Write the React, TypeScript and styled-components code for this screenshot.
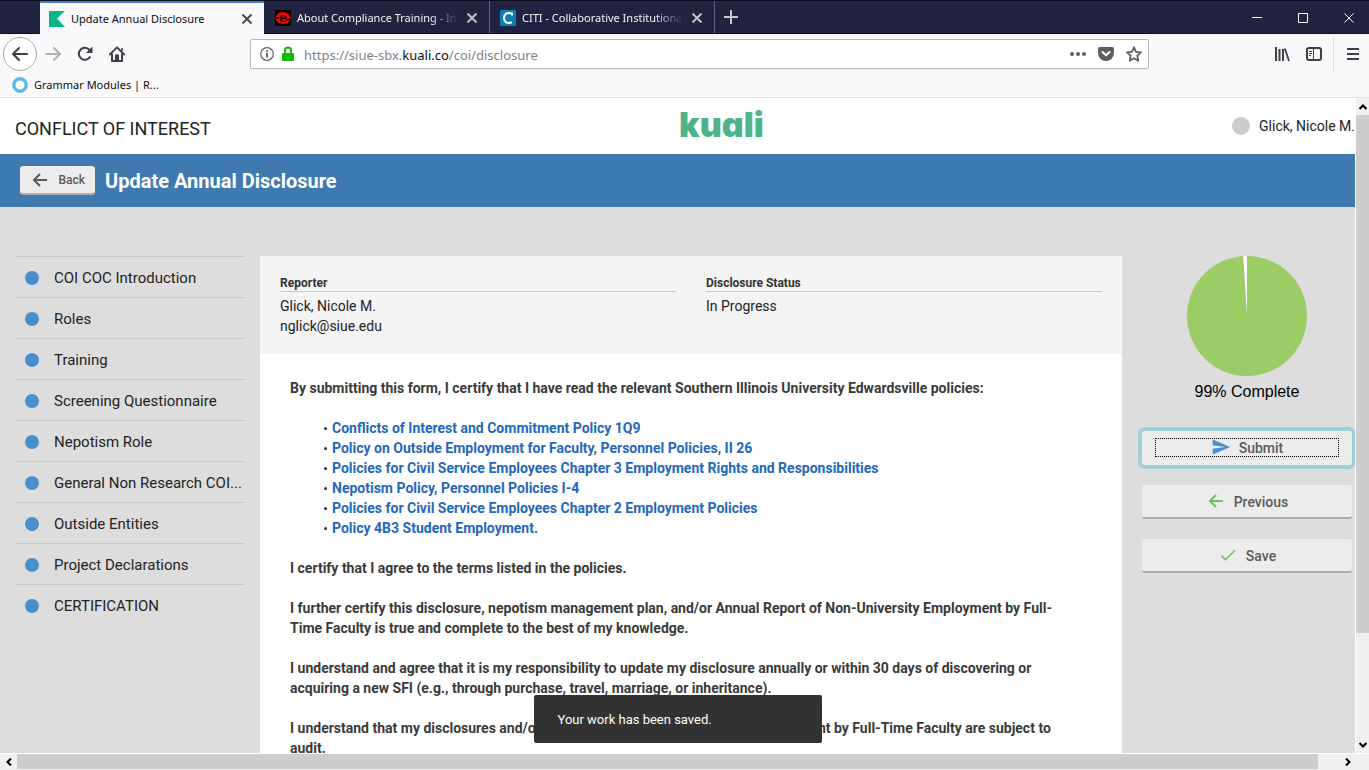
import React from 'react';
import styled, { createGlobalStyle, css } from 'styled-components';
import { MdSend, MdCheck } from 'react-icons/md';

const GlobalStyle = createGlobalStyle`
  *, *::before, *::after { box-sizing: border-box; }
  html, body { margin: 0; height: 100%; }
  body { font-family: Roboto, "Liberation Sans", sans-serif; color: #222; overflow: hidden; }
  button { font-family: inherit; padding: 0; border: 0; background: none; }
  h1, h2, p, ul, dl, dd { margin: 0; padding: 0; }
  a { color: inherit; text-decoration: none; }
  svg { display: block; flex: none; }
`;

const uiFont = '"Noto Sans", "Open Sans", sans-serif';

const Window = styled.div`
  display: flex;
  flex-direction: column;
  height: 100vh;
`;

/* ---------- browser chrome ---------- */

const TabBar = styled.div`
  display: flex;
  height: 34px;
  flex: none;
  padding-left: 40px;
  background: #212341;
  border-top: 1px solid #0b0b1c;
  border-bottom: 1px solid #0f0f24;
  font: 11px ${uiFont};
`;

const Tab = styled.div<{ $active?: boolean }>`
  display: flex;
  align-items: center;
  gap: 6px;
  width: 225px;
  padding: 1px 9px 0 10px;
  color: #f5f5fa;
  border-left: 1px solid #62637a;
  ${p => p.$active && css`
    width: 224px;
    height: 33px;
    padding: 0 9px;
    color: #0c0c0d;
    background: #f9f9fb;
    border-left: 0;
    border-top: 2px solid #3a7fd0;
    & + div { border-left-color: transparent; }
  `}
`;

const TabTitle = styled.span<{ $fade?: boolean }>`
  flex: 1;
  min-width: 0;
  overflow: hidden;
  white-space: nowrap;
  ${p => p.$fade && css`
    mask-image: linear-gradient(to left, transparent, #000 28px);
  `}
`;

const TabClose = styled.button<{ $dark?: boolean }>`
  display: grid;
  place-items: center;
  width: 16px;
  height: 16px;
  color: ${p => (p.$dark ? '#4a4a4f' : '#c2c2cc')};
`;

const NewTab = styled.button`
  display: grid;
  place-items: center;
  width: 33px;
  color: #c8c8d2;
  border-left: 1px solid #62637a;
`;

const WindowButtons = styled.div`
  display: flex;
  gap: 6px;
  margin-left: auto;
`;

const WindowButton = styled.button`
  display: grid;
  place-items: center;
  width: 40px;
  padding-top: 2px;
  color: #fff;
`;

const Toolbar = styled.div`
  display: flex;
  align-items: center;
  flex: none;
  height: 40px;
  padding: 0 8px 0 3px;
  background: #f9f9fb;
  color: #4a4a4f;
`;

const NavButtons = styled.div`
  display: flex;
  align-items: center;
  width: 247px;
`;

const NavButton = styled.button<{ $round?: boolean; $faded?: boolean }>`
  display: grid;
  place-items: center;
  width: 32px;
  height: 34px;
  color: ${p => (p.$faded ? '#b4b4b7' : '#3f3f44')};
  ${p => p.$round && css`
    width: 34px;
    background: #fff;
    border: 1px solid #a9a9ad;
    border-radius: 50%;
  `}
`;

const UrlBar = styled.div`
  display: flex;
  align-items: center;
  gap: 6px;
  flex: 1;
  height: 30px;
  padding: 0 6px 0 8px;
  background: #fff;
  border: 1px solid #b9b9bc;
  border-radius: 2px;
  box-shadow: 0 1px 3px rgba(0, 0, 0, 0.06);
`;

const UrlText = styled.div`
  flex: 1;
  padding: 2px 0 0 3px;
  font: 13px ${uiFont};
  color: #808085;
  white-space: nowrap;
  b { font-weight: 400; color: #0c0c0d; }
`;

const UrlActions = styled.div`
  display: flex;
  gap: 12px;
`;

const IconButton = styled.button`
  display: grid;
  place-items: center;
  width: 16px;
  height: 16px;
  color: #5f5f63;
`;

const ToolbarEnd = styled.div`
  display: flex;
  align-items: center;
  justify-content: flex-end;
  gap: 16px;
  width: 212px;
`;

const MenuBox = styled.div`
  display: flex;
  align-items: center;
  height: 34px;
  margin-left: -5px;
  padding-left: 11px;
  border-left: 1px solid #dcdcde;
`;

const Bookmarks = styled.div`
  display: flex;
  align-items: center;
  flex: none;
  height: 24px;
  padding: 0 0 2px 12px;
  background: #f9f9fb;
  border-bottom: 1px solid #e0e0e2;
  font: 11px ${uiFont};
  color: #0c0c0d;
  a { display: flex; align-items: center; gap: 6px; }
`;

/* ---------- scrolling frame ---------- */

const Frame = styled.div`
  display: grid;
  grid-template-columns: minmax(0, 1fr) 14px;
  grid-template-rows: minmax(0, 1fr) 17px;
  flex: 1;
  min-height: 0;
`;

const Viewport = styled.div`
  position: relative;
  overflow: hidden;
  background: #ddd;
`;

const ScrollTrack = styled.div<{ $horizontal?: boolean }>`
  display: flex;
  flex-direction: ${p => (p.$horizontal ? 'row' : 'column')};
  background: #f0f0f0;
  color: #5a5a5a;
  ${p => (p.$horizontal
    ? css`grid-column: 1 / -1; border-top: 1px solid #fff; border-bottom: 1px solid #f0f0f0; padding-right: 13px;`
    : css`border-left: 1px solid #fff;`)}
`;

const ScrollArrow = styled.button`
  display: grid;
  place-items: center;
  flex: 0 0 17px;
`;

const ScrollThumb = styled.div<{ $grow: number }>`
  flex: ${p => p.$grow} 1 0;
  background: #cdcdcd;
`;

const ScrollRest = styled.div<{ $grow: number }>`
  flex: ${p => p.$grow} 1 0;
`;

/* ---------- application ---------- */

const Page = styled.div`
  width: calc(100% + 22px);
`;

const AppHeader = styled.header`
  display: flex;
  align-items: center;
  justify-content: space-between;
  height: 56px;
  padding: 0 22px 0 15px;
  background: #fff;
`;

const AppName = styled.div`
  padding-top: 6px;
  font-size: 18px;
  line-height: 24px;
  color: #222;
`;

const Logo = styled.a`
  font: 900 34px/40px Inter, Lato, sans-serif;
  font-feature-settings: "cv11";
  color: #4fb389;
  padding-bottom: 2px;
`;

const User = styled.div`
  display: flex;
  align-items: center;
  gap: 9px;
  font-size: 14px;
  line-height: 20px;
`;

const Avatar = styled.span`
  width: 18px;
  height: 18px;
  border-radius: 50%;
  background: #ccc;
`;

const TitleBar = styled.div`
  display: flex;
  align-items: center;
  gap: 10px;
  height: 53px;
  padding: 0 20px;
  background: #3e7ab0;
`;

const Title = styled.h1`
  font-size: 20px;
  line-height: 24px;
  font-weight: 700;
  color: #fff;
`;

const RaisedButton = styled.button<{ $small?: boolean; $focused?: boolean }>`
  display: flex;
  align-items: center;
  justify-content: center;
  width: 100%;
  height: 34px;
  padding: 0 13px;
  font-size: 14px;
  font-weight: 500;
  line-height: 18px;
  color: #5a5a5a;
  background: #ececec;
  border-bottom: 2px solid #adadad;
  border-radius: 3px;
  ${p => p.$small && css`
    width: 75px;
    height: 29px;
    font-size: 12px;
    padding: 0 10px;
    justify-content: space-between;
  `}
  ${p => p.$focused && css`
    border-bottom-color: #ececec;
    box-shadow: 0 0 0 4px #9fd0da;
  `}
`;

const ButtonFace = styled.span<{ $focused?: boolean }>`
  display: flex;
  align-items: center;
  justify-content: center;
  gap: 8px;
  width: 100%;
  height: 19px;
  border: 1px dotted ${p => (p.$focused ? '#000' : 'transparent')};
`;

const ButtonLabel = styled.span`
  padding-top: 2px;
`;

const Columns = styled.div`
  display: grid;
  grid-template-columns: 230px minmax(0, 1fr) 210px;
  padding: 49px 25px 0 15px;
`;

const Steps = styled.nav`
  display: flex;
  flex-direction: column;
`;

const Step = styled.a`
  display: flex;
  align-items: center;
  gap: 15px;
  height: 41px;
  padding: 2px 0 0 10px;
  border-top: 1px solid #c8c8c8;
  font-size: 15px;
  line-height: 20px;
  white-space: nowrap;
  &::before {
    content: "";
    width: 14px;
    height: 14px;
    border-radius: 50%;
    background: #488fce;
  }
`;

const Sheet = styled.main`
  margin: 0 20px 0 15px;
  background: #fff;
`;

const Summary = styled.dl`
  display: grid;
  grid-template-columns: 1fr 1fr;
  gap: 30px;
  height: 98px;
  padding: 20px;
  background: #f4f4f4;
`;

const Fact = styled.div`
  dt {
    height: 16px;
    border-bottom: 1px solid #c8c8c8;
    font-size: 12px;
    font-weight: 700;
    line-height: 14px;
    color: #333;
  }
  dd {
    padding-top: 4px;
    font-size: 14px;
    line-height: 20px;
  }
`;

const Terms = styled.div`
  display: flex;
  flex-direction: column;
  gap: 20px;
  padding: 24px 50px 24px 30px;
  font-size: 14px;
  font-weight: 700;
  line-height: 20px;
  color: #3a3a3a;
`;

const PolicyList = styled.ul`
  padding-left: 34px;
  list-style: none;
  li { display: flex; align-items: center; gap: 5px; }
  li::before {
    content: "";
    width: 3px;
    height: 3px;
    border-radius: 50%;
    background: #333;
  }
  a { color: #1f68bb; }
`;

const Actions = styled.aside`
  display: flex;
  flex-direction: column;
  align-items: center;
  gap: 20px;
`;

const Progress = styled.div`
  display: flex;
  flex-direction: column;
  align-items: center;
  gap: 6px;
  margin-bottom: 10px;
  font: 16px/19px "Liberation Sans", Arial, sans-serif;
  color: #000;
`;

const Toast = styled.div`
  position: absolute;
  left: 50%;
  bottom: 10px;
  width: 288px;
  height: 48px;
  margin-left: -144px;
  padding: 1px 24px 0;
  font-size: 13px;
  line-height: 48px;
  color: #fff;
  background: #323232;
  border-radius: 2px;
`;

const Cross = ({ size = 10, width = 2 }: { size?: number; width?: number }) => (
  <svg width={size} height={size} viewBox="0 0 10 10" stroke="currentColor" strokeWidth={width} fill="none">
    <path d="M0.5 0.5L9.5 9.5M9.5 0.5L0.5 9.5" />
  </svg>
);

const Arrow = ({ color = 'currentColor', size = 20 }: { color?: string; size?: number }) => (
  <svg width={size} height={size} viewBox="-3 -3 20 20" stroke={color} strokeWidth="2" fill="none">
    <path d="M14 7H1.2M7 1L1 7L7 13" />
  </svg>
);

const Chevron = ({ d }: { d: string }) => (
  <svg width="8" height="8" viewBox="0 0 8 8" stroke="currentColor" strokeWidth="2" fill="none">
    <path d={d} />
  </svg>
);

const steps = [
  'COI COC Introduction', 'Roles', 'Training', 'Screening Questionnaire', 'Nepotism Role',
  'General Non Research COI...', 'Outside Entities', 'Project Declarations', 'CERTIFICATION',
];

const policies = [
  'Conflicts of Interest and Commitment Policy 1Q9',
  'Policy on Outside Employment for Faculty, Personnel Policies, II 26',
  'Policies for Civil Service Employees Chapter 3 Employment Rights and Responsibilities',
  'Nepotism Policy, Personnel Policies I-4',
  'Policies for Civil Service Employees Chapter 2 Employment Policies',
  'Policy 4B3 Student Employment.',
];

function BrowserChrome() {
  return (
    <>
      <TabBar>
        <Tab $active>
          <svg width="16" height="16" viewBox="0 0 16 16"><path d="M0 0H16L8 7.5L16 16H0Z" fill="#0bb58a" /></svg>
          <TabTitle>Update Annual Disclosure</TabTitle>
          <TabClose $dark aria-label="Close tab"><Cross /></TabClose>
        </Tab>
        <Tab>
          <svg width="16" height="16" viewBox="0 0 16 16">
            <rect width="16" height="16" fill="#000" />
            <ellipse cx="8" cy="8" rx="7.5" ry="6" fill="#f00" />
            <path d="M5 8.5H11C11 4.500 5.500 4.500 5.500 8.500C5.500 12 9.500 12 11.500 10.500M1 8H4M12 10.500L15 9" stroke="#200" strokeWidth="1.4" fill="none" />
          </svg>
          <TabTitle $fade>About Compliance Training - In</TabTitle>
          <TabClose aria-label="Close tab"><Cross /></TabClose>
        </Tab>
        <Tab>
          <svg width="16" height="16" viewBox="0 0 16 16">
            <rect width="16" height="16" fill="#0e7fb0" />
            <path d="M12 5.500V3.500C7 1.800 4 4 4 8C4 12 7 14.200 12 12.300" stroke="#fff" strokeWidth="2" fill="none" />
          </svg>
          <TabTitle $fade>CITI - Collaborative Institutiona</TabTitle>
          <TabClose aria-label="Close tab"><Cross /></TabClose>
        </Tab>
        <NewTab aria-label="New tab">
          <svg width="14" height="14" viewBox="0 0 14 14" stroke="currentColor" strokeWidth="2"><path d="M7 0V14M0 7H14" /></svg>
        </NewTab>
        <WindowButtons>
          <WindowButton aria-label="Minimize">
            <svg width="10" height="10" viewBox="0 0 10 10" stroke="currentColor"><path d="M0 4.500H10" /></svg>
          </WindowButton>
          <WindowButton aria-label="Maximize">
            <svg width="10" height="10" viewBox="0 0 10 10" stroke="currentColor" fill="none"><path d="M0.500 0.500H9.500V9.500H0.500Z" /></svg>
          </WindowButton>
          <WindowButton aria-label="Close window"><Cross width={1} /></WindowButton>
        </WindowButtons>
      </TabBar>

      <Toolbar>
        <NavButtons>
          <NavButton $round aria-label="Go back">
            <svg width="16" height="14" viewBox="0 0 16 14" stroke="currentColor" strokeWidth="2" fill="none" strokeLinecap="round" strokeLinejoin="round"><path d="M15 7H1.500M7 1L1 7L7 13" /></svg>
          </NavButton>
          <NavButton $faded aria-label="Go forward">
            <svg width="16" height="14" viewBox="0 0 16 14" stroke="currentColor" strokeWidth="2" fill="none" strokeLinecap="round" strokeLinejoin="round"><path d="M1 7H14.500M9 1L15 7L9 13" /></svg>
          </NavButton>
          <NavButton aria-label="Reload">
            <svg width="16" height="16" viewBox="0 0 16 16">
              <path d="M13.200 10.500A6 6 0 1 1 12.500 4" stroke="currentColor" strokeWidth="2" fill="none" />
              <path d="M15.500 0.500V7H9Z" fill="currentColor" />
            </svg>
          </NavButton>
          <NavButton aria-label="Home">
            <svg width="16" height="16" viewBox="0 0 16 16" fill="none" stroke="currentColor">
              <path d="M0.800 8.500L8 1.300L15.200 8.500" strokeWidth="1.800" strokeLinecap="round" strokeLinejoin="round" />
              <path d="M3 7.500V15H13V7.500" strokeWidth="2" strokeLinejoin="round" />
              <path d="M13 2V5" strokeWidth="1.600" />
              <rect x="6.500" y="9" width="3" height="6" fill="currentColor" />
            </svg>
          </NavButton>
        </NavButtons>
        <UrlBar>
          <IconButton aria-label="Site information">
            <svg width="14" height="14" viewBox="0 0 14 14" fill="none" stroke="currentColor">
              <circle cx="7" cy="7" r="6.300" strokeWidth="1.200" />
              <path d="M7 6V10.500M7 3.200V4.900" strokeWidth="1.800" />
            </svg>
          </IconButton>
          <svg width="14" height="16" viewBox="0 0 14 16">
            <rect x="1" y="7" width="12" height="8" rx="1" fill="#12bc00" />
            <path d="M4 7.500V4.500A3 3 0 0 1 10 4.500V7.500" fill="none" stroke="#12bc00" strokeWidth="2" />
          </svg>
          <UrlText role="textbox" aria-label="Address" tabIndex={0}>https://siue-sbx.<b>kuali.co</b>/coi/disclosure</UrlText>
          <UrlActions>
            <IconButton aria-label="Page actions">
              <svg width="16" height="16" viewBox="0 0 16 16" fill="currentColor"><circle cx="2" cy="8" r="2" /><circle cx="8" cy="8" r="2" /><circle cx="14" cy="8" r="2" /></svg>
            </IconButton>
            <IconButton aria-label="Save to Pocket">
              <svg width="16" height="16" viewBox="0 0 16 16">
                <path d="M1.500 1H14.500Q16 1 16 2.500V7A8 8 0 0 1 0 7V2.500Q0 1 1.500 1Z" fill="currentColor" />
                <path d="M4.500 6L8 9.300L11.500 6" fill="none" stroke="#fff" strokeWidth="2" strokeLinecap="round" strokeLinejoin="round" />
              </svg>
            </IconButton>
            <IconButton aria-label="Bookmark this page">
              <svg width="16" height="16" viewBox="0 0 16 16" fill="none" stroke="currentColor" strokeWidth="1.800" strokeLinejoin="round">
                <path d="M8 1.300L10 5.800L15 6.300L11.300 9.700L12.300 14.800L8 12.200L3.700 14.800L4.700 9.700L1 6.300L6 5.800Z" />
              </svg>
            </IconButton>
          </UrlActions>
        </UrlBar>
        <ToolbarEnd>
          <IconButton aria-label="Library">
            <svg width="16" height="16" viewBox="0 0 16 16" fill="none" stroke="#3f3f44">
              <path d="M2 1V15M5.500 3V15M9 3V15" strokeWidth="2" />
              <path d="M10.800 2.500L15 15" strokeWidth="1.800" />
            </svg>
          </IconButton>
          <IconButton aria-label="Sidebars">
            <svg width="16" height="16" viewBox="0 0 16 16" fill="none" stroke="#3f3f44">
              <rect x="1" y="2" width="14" height="12" rx="2" strokeWidth="2" />
              <path d="M7.500 2V14M3 5.500H6M3 7.500H6M3 9.500H5" />
            </svg>
          </IconButton>
          <MenuBox>
            <IconButton aria-label="Menu">
              <svg width="14" height="14" viewBox="0 0 14 14" stroke="#3f3f44" strokeWidth="2"><path d="M1 2H13M1 7H13M1 12H13" /></svg>
            </IconButton>
          </MenuBox>
        </ToolbarEnd>
      </Toolbar>

      <Bookmarks>
        <a href="#grammar">
          <svg width="16" height="16" viewBox="0 0 16 16"><circle cx="8" cy="8" r="6.200" fill="#fff" stroke="#5cb8ea" strokeWidth="3.400" /></svg>
          Grammar Modules | R...
        </a>
      </Bookmarks>
    </>
  );
}

export default function App() {
  return (
    <Window>
      <GlobalStyle />
      <BrowserChrome />
      <Frame>
        <Viewport>
          <Page>
            <AppHeader>
              <AppName>CONFLICT OF INTEREST</AppName>
              <Logo href="#home">kuali</Logo>
              <User><Avatar />Glick, Nicole M.</User>
            </AppHeader>
            <TitleBar>
              <RaisedButton $small><Arrow />Back</RaisedButton>
              <Title>Update Annual Disclosure</Title>
            </TitleBar>
            <Columns>
              <Steps>
                {steps.map(step => <Step key={step} href="#step">{step}</Step>)}
              </Steps>
              <Sheet>
                <Summary>
                  <Fact>
                    <dt>Reporter</dt>
                    <dd>Glick, Nicole M.<br />nglick@siue.edu</dd>
                  </Fact>
                  <Fact>
                    <dt>Disclosure Status</dt>
                    <dd>In Progress</dd>
                  </Fact>
                </Summary>
                <Terms>
                  <p>By submitting this form, I certify that I have read the relevant Southern Illinois University Edwardsville policies:</p>
                  <PolicyList>
                    {policies.map(policy => <li key={policy}><a href="#policy">{policy}</a></li>)}
                  </PolicyList>
                  <p>I certify that I agree to the terms listed in the policies.</p>
                  <p>I further certify this disclosure, nepotism management plan, and/or Annual Report of Non-University Employment by Full-Time Faculty is true and complete to the best of my knowledge.</p>
                  <p>I understand and agree that it is my responsibility to update my disclosure annually or within 30 days of discovering or acquiring a new SFI (e.g., through purchase, travel, marriage, or inheritance).</p>
                  <p>I understand that my disclosures and/or Annual Report of Non-University Employment by Full-Time Faculty are subject to audit.</p>
                </Terms>
              </Sheet>
              <Actions>
                <Progress>
                  <svg width="120" height="120" viewBox="0 0 120 120" role="img" aria-label="Completion chart">
                    <circle cx="60" cy="60" r="60" fill="#9ccc65" />
                    <path d="M60 60L56.200 0.100A60 60 0 0 1 60 0Z" fill="#fff" />
                  </svg>
                  99% Complete
                </Progress>
                <RaisedButton $focused>
                  <ButtonFace $focused><MdSend size={20} color="#488fce" /><ButtonLabel>Submit</ButtonLabel></ButtonFace>
                </RaisedButton>
                <RaisedButton>
                  <ButtonFace><Arrow color="#6cc164" /><ButtonLabel>Previous</ButtonLabel></ButtonFace>
                </RaisedButton>
                <RaisedButton>
                  <ButtonFace><MdCheck size={20} color="#6cc164" /><ButtonLabel>Save</ButtonLabel></ButtonFace>
                </RaisedButton>
              </Actions>
            </Columns>
          </Page>
          <Toast role="status">Your work has been saved.</Toast>
        </Viewport>
        <ScrollTrack>
          <ScrollArrow aria-label="Scroll up"><Chevron d="M0.500 6L4 2.500L7.500 6" /></ScrollArrow>
          <ScrollThumb $grow={518} />
          <ScrollRest $grow={103} />
          <ScrollArrow aria-label="Scroll down"><Chevron d="M0.500 2L4 5.500L7.500 2" /></ScrollArrow>
        </ScrollTrack>
        <ScrollTrack $horizontal>
          <ScrollArrow aria-label="Scroll left"><Chevron d="M6 0.500L2.500 4L6 7.500" /></ScrollArrow>
          <ScrollThumb $grow={1301} />
          <ScrollRest $grow={21} />
          <ScrollArrow aria-label="Scroll right"><Chevron d="M2 0.500L5.500 4L2 7.500" /></ScrollArrow>
        </ScrollTrack>
      </Frame>
    </Window>
  );
}
